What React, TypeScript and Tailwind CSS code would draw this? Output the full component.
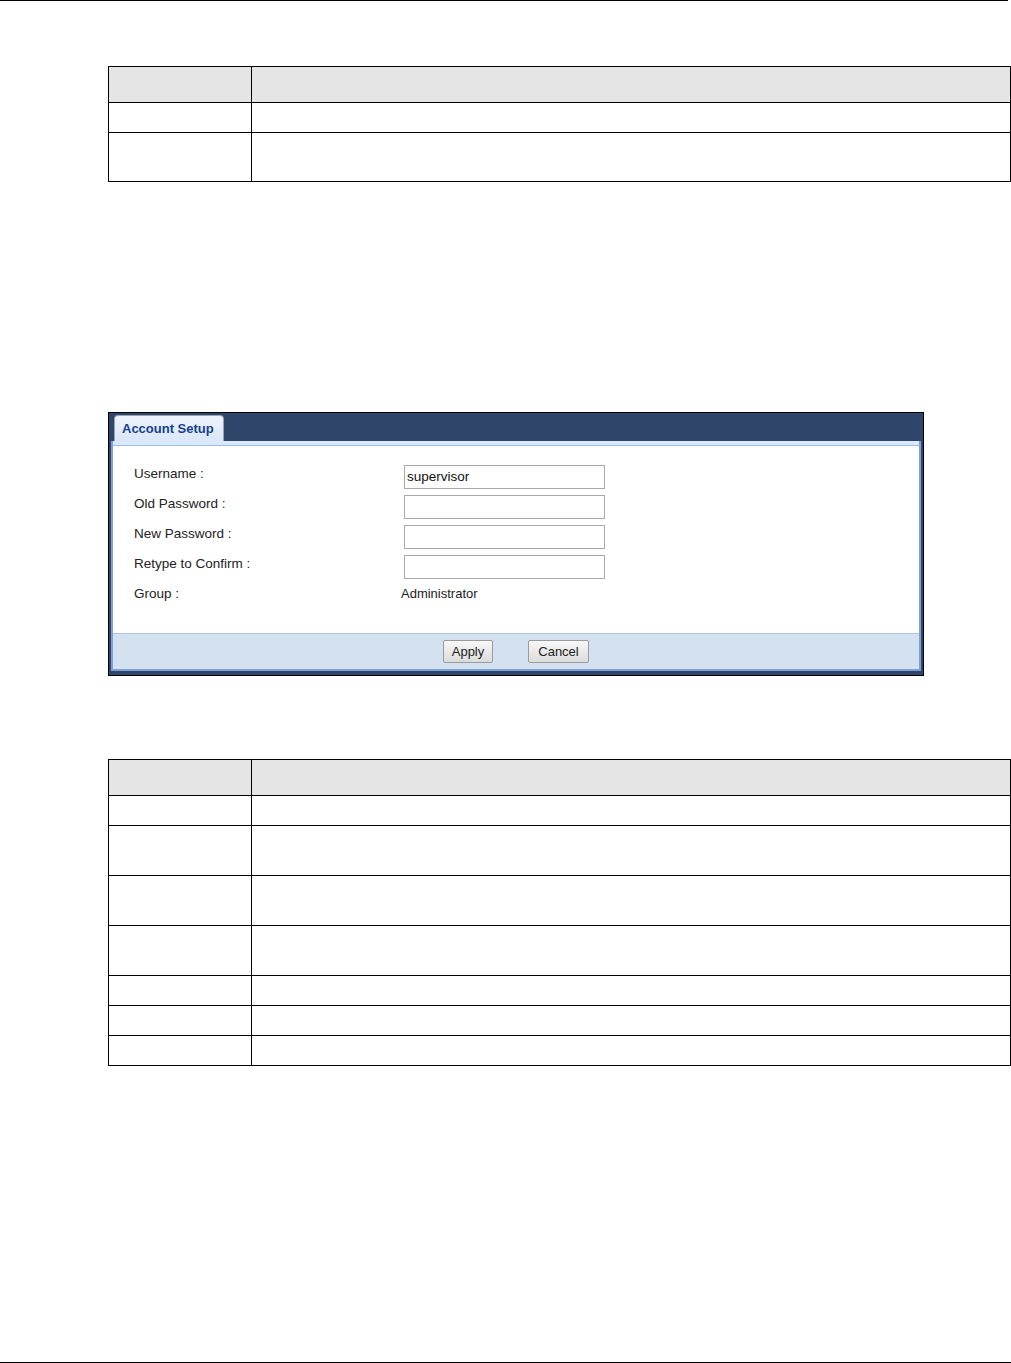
import React from 'react';

const font = { fontFamily: '"Liberation Sans", Arial, sans-serif' };

type RowSpec = number[];

// heights include the row's top border (border-box)
function RefTable({ rows }: { rows: RowSpec }) {
  return (
    <div className="ml-[108px] w-[903px] border border-black">
      {rows.map((h, i) => (
        <div
          key={i}
          className={`flex ${i > 0 ? 'border-t border-black' : ''} ${i === 0 ? 'bg-[#e5e5e5]' : ''}`}
          style={{ height: h }}
        >
          <div className="w-[143px] border-r border-black" />
          <div className="flex-1" />
        </div>
      ))}
    </div>
  );
}

function Field({ label, value }: { label: string; value?: string }) {
  return (
    <div className="flex h-[30px] items-start">
      <div className="w-[270px] pt-[1px] text-[13.5px] leading-[16px] text-[#222]">{label}</div>
      <div className="h-[24px] w-[201px] border border-[#a9a9a9] bg-white px-[2px] text-[13.5px] leading-[22px] text-[#111]">
        {value}
      </div>
    </div>
  );
}

function AccountSetup() {
  return (
    <div className="ml-[108px] mt-[230px] w-[816px] border border-black bg-[#2f4569] px-[2px] pb-[4px] pt-[2px]">
      {/* tab strip */}
      <div className="flex h-[26px] items-end">
        <div className="ml-[3px] flex h-[26px] w-[110px] items-center rounded-t-[4px] border-l border-r border-t border-[#9aa3b0] bg-gradient-to-b from-[#eef4fc] to-[#d9e7f9] pl-[7px] text-[13px] font-bold text-[#173f8d]">
          Account Setup
        </div>
      </div>

      {/* body frame */}
      <div className="border-x-2 border-b-2 border-[#7d9fd3]">
        <div className="h-[5px] border-b border-[#9dbde6] bg-[#d9e8fa]" />
        <div className="h-[187px] bg-white pl-[21px] pt-[19px]">
          <Field label="Username :" value="supervisor" />
          <Field label="Old Password :" />
          <Field label="New Password :" />
          <Field label="Retype to Confirm :" />
          <div className="flex h-[30px] items-start pt-[1px]">
            <div className="w-[270px] text-[13.5px] leading-[16px] text-[#222]">Group :</div>
            <div className="-ml-[3px] text-[13px] leading-[16px] text-[#222]">Administrator</div>
          </div>
        </div>
        <div className="flex h-[36px] items-center justify-center gap-[35px] border-t border-[#a9c6ea] bg-[#d4e1f1]">
          <button className="h-[23px] w-[50px] rounded-[2px] border border-[#9a9a9a] bg-gradient-to-b from-[#f8f8f8] to-[#dcdcdc] text-[13px] leading-[20px] text-[#222]">
            Apply
          </button>
          <button className="h-[23px] w-[61px] rounded-[2px] border border-[#9a9a9a] bg-gradient-to-b from-[#f8f8f8] to-[#dcdcdc] text-[13px] leading-[20px] text-[#222]">
            Cancel
          </button>
        </div>
      </div>
    </div>
  );
}

export default function App() {
  return (
    <div className="flex h-[1363px] w-[1011px] flex-col bg-white" style={font}>
      <div className="h-px w-[1008px] bg-black" />

      <div className="mt-[65px]">
        <RefTable rows={[35, 30, 49]} />
      </div>

      <AccountSetup />

      <div className="mt-[83px]">
        <RefTable rows={[35, 30, 50, 50, 50, 30, 30, 30]} />
      </div>

      <div className="mt-auto h-px w-full bg-black" />
    </div>
  );
}
